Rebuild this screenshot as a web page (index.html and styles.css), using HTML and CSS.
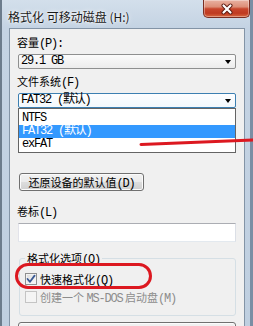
FILE: index.html
```html
<!DOCTYPE html>
<html lang="zh-CN">
<head>
<meta charset="utf-8">
<title>格式化 可移动磁盘 (H:)</title>
<link rel="stylesheet" href="styles.css">
</head>
<body>
<div class="window">
  <div class="titlebar">
    <span class="title">格式化 可移动磁盘 (H:)</span>
    <button class="close" aria-label="关闭">
      <svg width="14" height="12" viewBox="0 0 14 12"><path class="x-shadow" d="M3.5 2.5 L10.5 9.5 M10.5 2.5 L3.5 9.5"/><path class="x" d="M3.5 2.5 L10.5 9.5 M10.5 2.5 L3.5 9.5"/></svg>
    </button>
  </div>
  <div class="client">
    <div class="label">容量<span class="m">(P):</span></div>
    <div class="combo"><span class="val">29.1 GB</span><i class="arrow"></i></div>
    <div class="label">文件系统<span class="m">(F)</span></div>
    <div class="combo-wrap">
      <div class="combo focus"><span class="val">FAT32 (默认)</span><i class="arrow"></i></div>
      <ul class="dropdown">
        <li>NTFS</li>
        <li class="sel">FAT32 (默认)</li>
        <li>exFAT</li>
      </ul>
    </div>
    <button class="btn restore">还原设备的默认值<span class="m">(D)</span></button>
    <div class="label label-vol">卷标<span class="m">(L)</span></div>
    <div class="textbox"></div>
    <fieldset class="group">
      <legend>格式化选项<span class="m">(O)</span></legend>
      <div class="check"><span class="box"><svg width="10" height="10" viewBox="0 0 10 10"><path d="M1.5 5 L4 7.8 L8.6 1.6" /></svg></span><span>快速格式化<span class="m">(Q)</span></span></div>
      <div class="check disabled"><span class="box"></span><span>创建一个 <span class="m">MS-DOS</span> 启动盘<span class="m">(M)</span></span></div>
    </fieldset>
    <button class="btn start" aria-label="开始"></button>
  </div>
</div>
<svg class="marks" width="253" height="326" viewBox="0 0 253 326">
  <path class="mark" d="M141 144.5 L253 140"/>
  <rect class="mark" x="16.5" y="264.5" width="134" height="23" rx="11.5"/>
</svg>
</body>
</html>
```

FILE: styles.css
```css
* { box-sizing: border-box; }
html, body { margin: 0; padding: 0; }
body {
  position: relative;
  width: 253px;
  height: 326px;
  overflow: hidden;
  font-family: "Noto Sans CJK SC", "Noto Sans", sans-serif;
  font-size: 11px;
  color: #000;
  background: #c3d2e2;
}
.window {
  height: 326px;
  display: flex;
  flex-direction: column;
  border-left: 2px solid #6c7c8c;
  border-right: 3px solid #7a8ea4;
  background: linear-gradient(180deg, #d3dfeb 0, #c4d3e3 28px, #bfcfe0 100%);
}
.titlebar {
  height: 28px;
  flex: none;
  display: flex;
  align-items: flex-start;
  justify-content: space-between;
  padding-left: 6px;
}
.title {
  margin-top: 9px;
  font-size: 12px;
  line-height: 15px;
  color: #1a1a1a;
  text-shadow: 0 0 5px #fff, 0 0 2px #fff;
  white-space: nowrap;
}
.close {
  width: 47px;
  height: 18px;
  padding: 0;
  border: 1px solid #7a2e22;
  border-top: none;
  border-radius: 0 0 5px 5px;
  background: linear-gradient(180deg, #e9b2a2 0, #dd8f78 40%, #c8462c 52%, #bf3a21 78%, #d8683f 100%);
  box-shadow: inset 0 0 0 1px rgba(255,255,255,.35);
  display: flex;
  align-items: center;
  justify-content: center;
}
.close .x-shadow { stroke: #5a1a10; stroke-width: 4; stroke-linecap: round; fill: none; }
.close .x { stroke: #fff; stroke-width: 2.2; stroke-linecap: round; fill: none; }
.client {
  flex: 1;
  min-height: 0;
  margin: 0 5px 0 7px;
  border: 1px solid #8394a6;
  border-bottom: none;
  background: #f0f0f0;
  padding: 6px 7px 0 7px;
  display: flex;
  flex-direction: column;
  align-items: stretch;
}
.label {
  height: 14px;
  flex: none;
  line-height: 14px;
  font-size: 11px;
  white-space: nowrap;
}
.combo + .label, .combo-wrap + .label { margin-top: 5px; }
.m, .val, .dropdown li {
  font-family: "Liberation Mono", "Noto Sans CJK SC", monospace;
  font-size: 12px;
  letter-spacing: -1.2px;
}
.combo {
  height: 15px;
  flex: none;
  margin: 5px 1px 0;
  border: 1px solid #8e8f8f;
  border-radius: 2px;
  background: linear-gradient(180deg, #fbfbfb, #ececec);
  padding-left: 2px;
  display: flex;
  align-items: center;
}
.combo.focus {
  border-color: #3c7fb1;
  background: linear-gradient(180deg, #fdfeff, #f3f8fc);
}
.val { line-height: 13px; white-space: nowrap; }
.arrow {
  margin-left: auto;
  margin-right: 4px;
  width: 0;
  height: 0;
  border-top: 4px solid #000;
  border-left: 3.5px solid transparent;
  border-right: 3.5px solid transparent;
}
.combo-wrap { position: relative; flex: none; margin: 5px 1px 0; }
.combo-wrap .combo { margin: 0; }
.dropdown {
  position: absolute;
  top: 100%;
  left: 0;
  right: 0;
  z-index: 2;
  margin: 0;
  padding: 3px 0 1px;
  list-style: none;
  background: #fff;
  border: 1px solid #646464;
}
.dropdown li {
  height: 13px;
  line-height: 13px;
  padding-left: 3px;
  white-space: nowrap;
}
.dropdown li.sel { background: #3399ff; color: #fff; }
.btn {
  display: block;
  flex: none;
  padding: 0;
  border: 1px solid #707070;
  border-radius: 3px;
  background: linear-gradient(180deg, #f2f2f2 0, #ebebeb 48%, #dddddd 52%, #cfcfcf 100%);
  box-shadow: inset 0 0 0 1px #fbfbfb;
  font-family: inherit;
  font-size: 11px;
  color: #000;
  white-space: nowrap;
}
.restore {
  width: 125px;
  height: 18px;
  line-height: 16px;
  margin: 65px 0 0 2px;
}
.label-vol { margin-top: 13px; }
.textbox {
  height: 19px;
  flex: none;
  margin: 5px 1px 0;
  background: #fff;
  border: 1px solid;
  border-color: #abadb3 #dbdfe6 #e3e9ef #e2e3ea;
}
.group {
  flex: none;
  margin: 9px 1px 0 2px;
  padding: 0 0 9px 5px;
  border: 1px solid #d5dfe5;
  border-radius: 3px;
  min-width: 0;
}
.group legend {
  padding: 0 2px;
  height: 14px;
  line-height: 14px;
  white-space: nowrap;
}
.check {
  height: 18px;
  display: flex;
  align-items: center;
  gap: 3px;
  white-space: nowrap;
}
.group legend + .check { margin-top: 5px; }
.box {
  width: 12px;
  height: 12px;
  flex: none;
  border: 1px solid #8f8f8f;
  background: linear-gradient(135deg, #dcdcdc, #fbfbfb);
  box-shadow: inset 0 0 0 1px #f4f4f4;
  display: flex;
  align-items: center;
  justify-content: center;
}
.box path { fill: none; stroke: #3b5a94; stroke-width: 1.8; stroke-linecap: round; stroke-linejoin: round; }
.check.disabled { color: #8d8d8d; }
.check.disabled .box { border-color: #c4c4c4; background: #f4f4f4; box-shadow: none; }
.start {
  height: 24px;
  margin: 6px 1px 0;
}
.marks {
  position: absolute;
  left: 0;
  top: 0;
  z-index: 10;
  pointer-events: none;
}
.mark {
  fill: none;
  stroke: #dc1820;
  stroke-width: 3;
  stroke-linecap: round;
}
```
